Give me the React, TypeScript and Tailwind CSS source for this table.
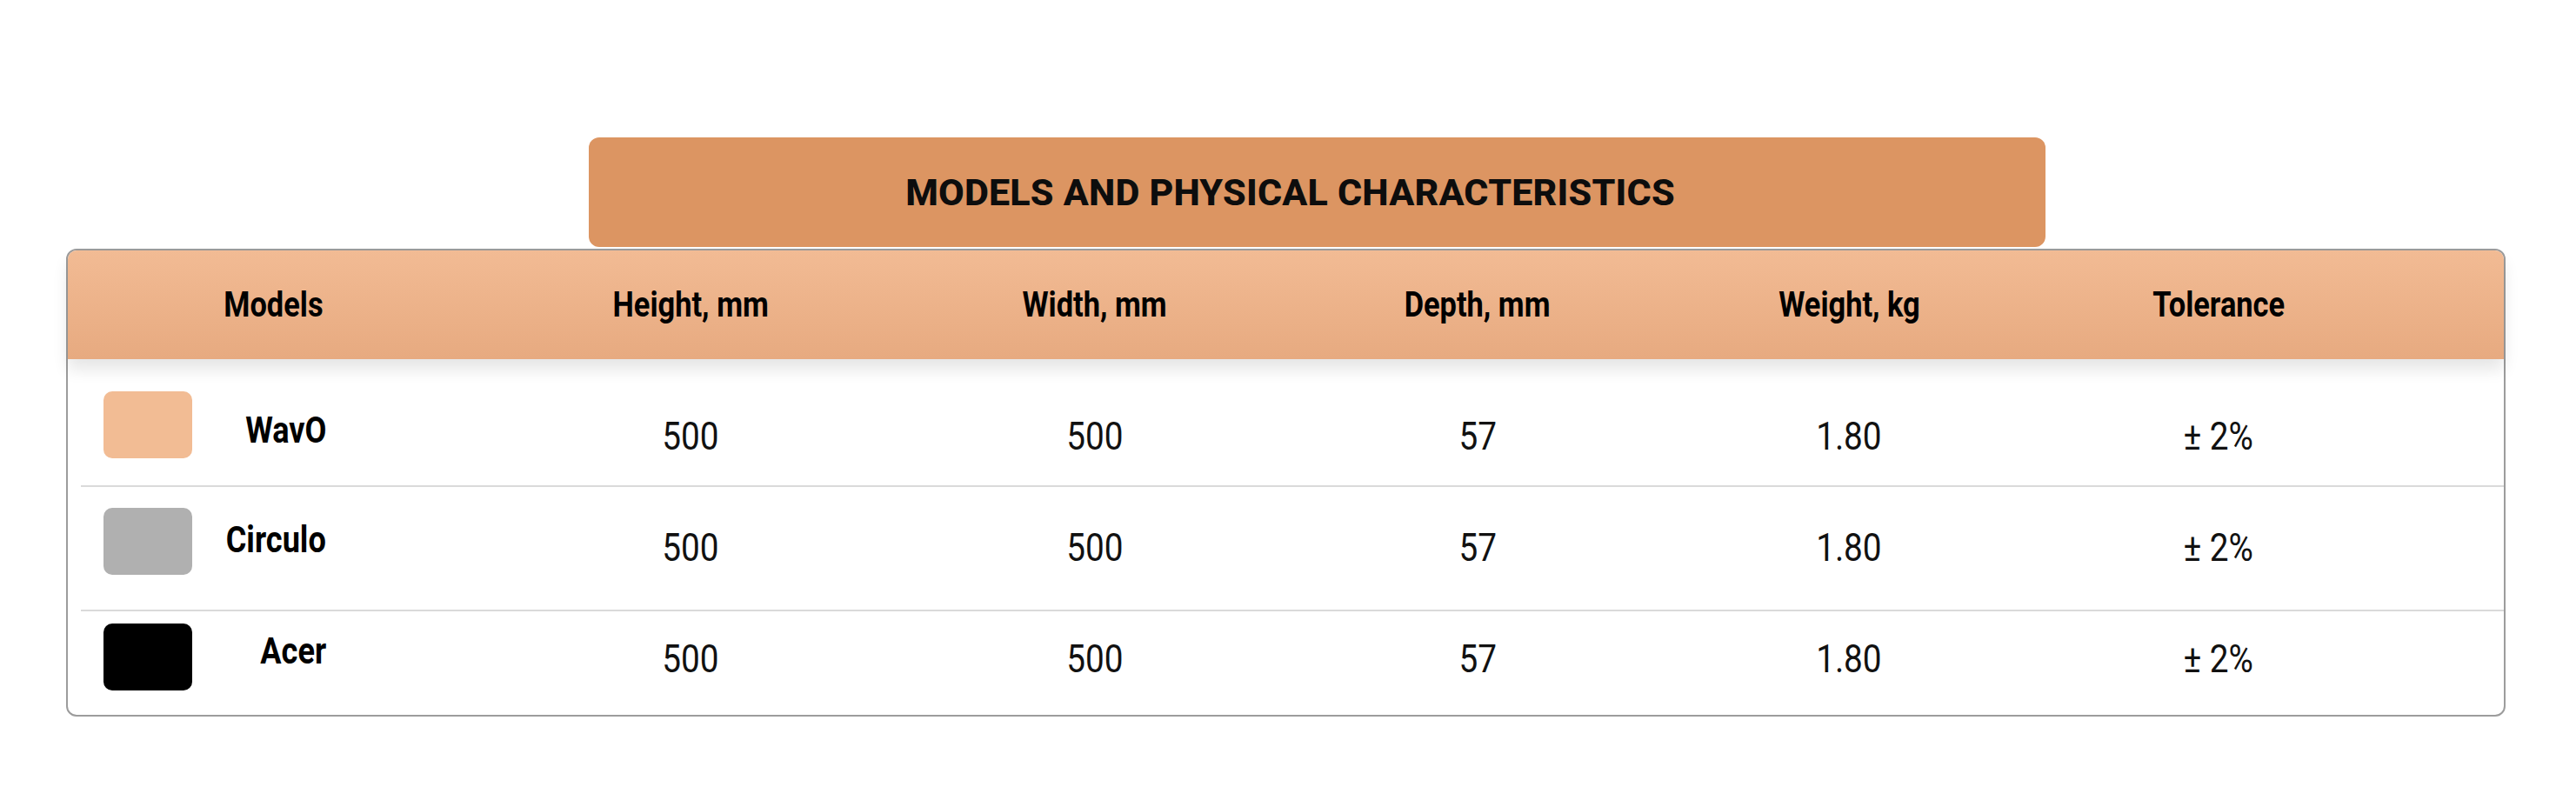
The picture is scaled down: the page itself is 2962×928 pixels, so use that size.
import React from 'react';

const columns = ['Models', 'Height, mm', 'Width, mm', 'Depth, mm', 'Weight, kg', 'Tolerance'];

const rows = [
  {
    name: 'WavO',
    swatch: 'bg-[#f2bc94]',
    row: 'h-[145px] pt-[31px]',
    swatchShift: 'mb-[26px]',
    nameShift: 'mb-[12px]',
  },
  {
    name: 'Circulo',
    swatch: 'bg-[#b0b0b0]',
    row: 'h-[141px] pb-[3px]',
    swatchShift: 'mb-[14px]',
    nameShift: 'mb-[16px]',
  },
  {
    name: 'Acer',
    swatch: 'bg-black',
    row: 'h-[119px] pb-[11px]',
    swatchShift: 'mb-[4px]',
    nameShift: 'mb-[16px]',
  },
];

const values = ['500', '500', '57', '1.80', '± 2%'];

const grid = 'grid grid-cols-[472px_488px_442px_438px_416px_434px_1fr] items-center';

export default function App() {
  return (
    <div className="h-[928px] w-full bg-white pt-[158px] pl-[76px] pr-[81px] font-[Roboto,'Liberation_Sans',sans-serif] text-black">
      {/* Title banner */}
      <div className="ml-[601px] flex h-[126px] w-[1675px] items-center justify-center rounded-[12px] bg-[#dc9562] pr-[62px]">
        <h1 className="text-[43px] font-extrabold leading-none tracking-[0.2px] text-[#0d0d0d]">MODELS AND PHYSICAL CHARACTERISTICS</h1>
      </div>

      {/* Table */}
      <div className="mt-[2px] rounded-[12px] border-2 border-[#9c9c9c]">
        <div className={`${grid} relative z-10 h-[125px] rounded-t-[10px] bg-gradient-to-b from-[#f2bb94] to-[#e7aa80] shadow-[0_12px_18px_rgba(0,0,0,0.10)]`}>
          {columns.map((c) => (
            <div key={c} className="flex justify-center">
              <span className="inline-block scale-x-[0.86] text-[40px] font-bold leading-none">{c}</span>
            </div>
          ))}
        </div>

        {rows.map((r, i) => (
          <React.Fragment key={r.name}>
            {i > 0 && <div className="ml-[15px] h-[2px] bg-[#dadada]" />}
            <div className={`${grid} ${r.row}`}>
              <div className="flex items-center pl-[41px]">
                <div className={`h-[77px] w-[102px] shrink-0 rounded-[10px] ${r.swatch} ${r.swatchShift}`} />
                <div className={`flex w-[154px] justify-end ${r.nameShift}`}>
                  <span className="inline-block origin-right scale-x-[0.86] text-[42px] font-bold leading-none">{r.name}</span>
                </div>
              </div>
              {values.map((v, j) => (
                <div key={j} className="flex justify-center">
                  <span className="inline-block scale-x-[0.86] text-[45px] leading-none text-[#111]">{v}</span>
                </div>
              ))}
            </div>
          </React.Fragment>
        ))}
      </div>
    </div>
  );
}
